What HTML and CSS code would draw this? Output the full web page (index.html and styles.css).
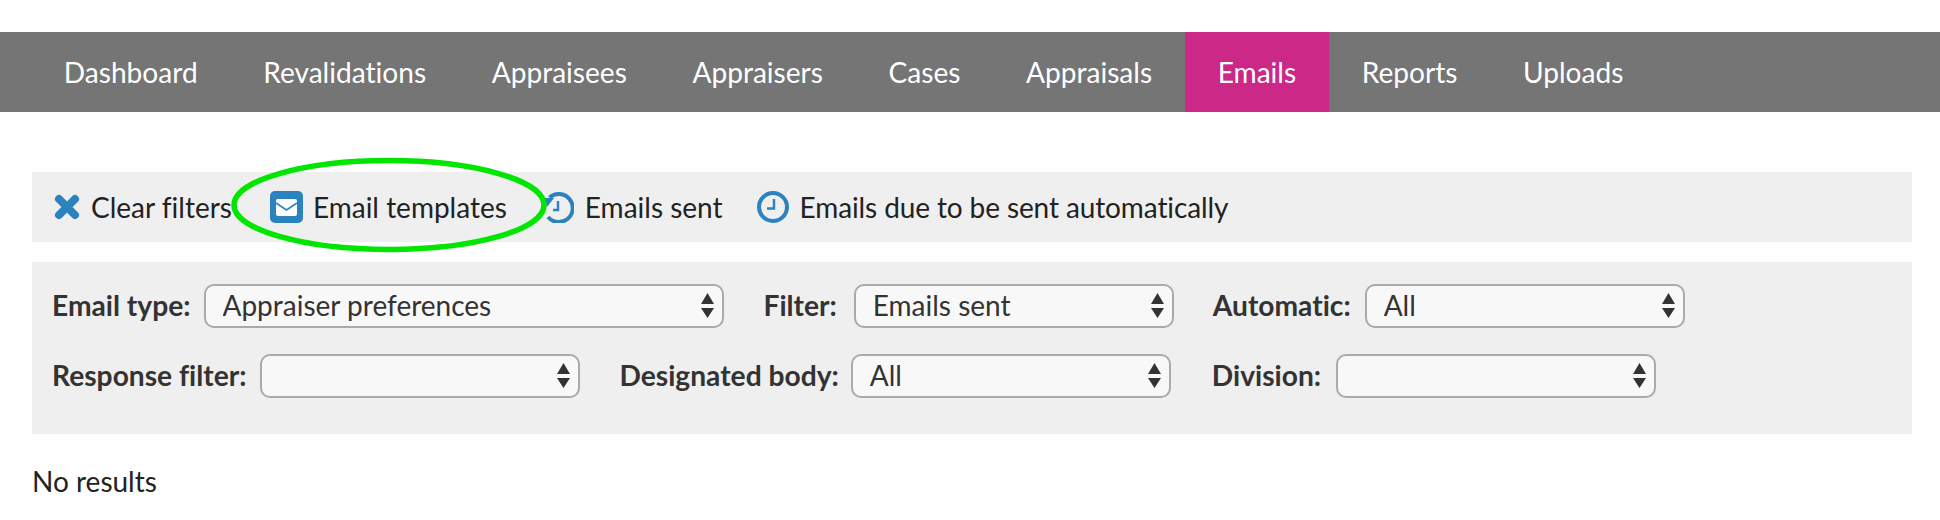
FILE: index.html
```html
<!DOCTYPE html>
<html lang="en">
<head>
<meta charset="utf-8">
<title>Emails</title>
<link rel="stylesheet" href="styles.css">
</head>
<body>
<nav class="nav">
  <a class="tab">Dashboard</a>
  <a class="tab">Revalidations</a>
  <a class="tab">Appraisees</a>
  <a class="tab">Appraisers</a>
  <a class="tab">Cases</a>
  <a class="tab">Appraisals</a>
  <a class="tab active">Emails</a>
  <a class="tab">Reports</a>
  <a class="tab">Uploads</a>
</nav>
<main class="content">
  <div class="toolbar">
    <a class="tool t-clear">
      <svg class="ico-x" viewBox="0 0 26 26"><path d="M5 5 L21 21 M21 5 L5 21" fill="none" stroke="#2a83bf" stroke-width="8" stroke-linecap="round"/></svg>
      Clear filters
    </a>
    <a class="tool t-templates">
      <svg class="ico-mail" viewBox="0 0 33 32"><rect width="33" height="32" rx="5" fill="#2a83bf"/><rect x="6" y="8" width="21" height="17" rx="2" fill="#fff"/><path d="M6 12 L16.500 19 L27 12" fill="none" stroke="#2a83bf" stroke-width="1.600"/></svg>
      Email templates
    </a>
    <a class="tool t-sent">
      <svg class="ico-clock" viewBox="0 0 32 32"><path d="M7.500 6.500 A14 14 0 1 1 6 26" fill="none" stroke="#2a83bf" stroke-width="4"/><path d="M2 7 L12 7 L5 16 Z" fill="#2a83bf"/><path d="M16 10 V19 H11" fill="none" stroke="#2a83bf" stroke-width="2.400"/></svg>
      Emails sent
    </a>
    <a class="tool t-due">
      <svg class="ico-clock" viewBox="0 0 32 32"><circle cx="16" cy="16" r="14" fill="none" stroke="#2a83bf" stroke-width="4"/><path d="M17 8 V17.500 H10" fill="none" stroke="#2a83bf" stroke-width="2.400"/></svg>
      Emails due to be sent automatically
    </a>
  </div>
  <form class="filters">
    <div class="row">
      <label class="field f-type"><span class="lbl">Email type:</span>
        <span class="sel sel-wide"><select><option>Appraiser preferences</option></select><svg class="arrows" viewBox="0 0 13 25"><path d="M6.500 0 L13 11 H0 Z M6.500 25 L0 15 H13 Z" fill="#333"/></svg></span>
      </label>
      <label class="field f-filter"><span class="lbl">Filter:</span>
        <span class="sel"><select><option>Emails sent</option></select><svg class="arrows" viewBox="0 0 13 25"><path d="M6.500 0 L13 11 H0 Z M6.500 25 L0 15 H13 Z" fill="#333"/></svg></span>
      </label>
      <label class="field"><span class="lbl">Automatic:</span>
        <span class="sel"><select><option>All</option></select><svg class="arrows" viewBox="0 0 13 25"><path d="M6.500 0 L13 11 H0 Z M6.500 25 L0 15 H13 Z" fill="#333"/></svg></span>
      </label>
    </div>
    <div class="row row-b">
      <label class="field"><span class="lbl">Response filter:</span>
        <span class="sel"><select><option></option></select><svg class="arrows" viewBox="0 0 13 25"><path d="M6.500 0 L13 11 H0 Z M6.500 25 L0 15 H13 Z" fill="#333"/></svg></span>
      </label>
      <label class="field f-body"><span class="lbl">Designated body:</span>
        <span class="sel"><select><option>All</option></select><svg class="arrows" viewBox="0 0 13 25"><path d="M6.500 0 L13 11 H0 Z M6.500 25 L0 15 H13 Z" fill="#333"/></svg></span>
      </label>
      <label class="field f-division"><span class="lbl">Division:</span>
        <span class="sel"><select><option></option></select><svg class="arrows" viewBox="0 0 13 25"><path d="M6.500 0 L13 11 H0 Z M6.500 25 L0 15 H13 Z" fill="#333"/></svg></span>
      </label>
    </div>
  </form>
  <p class="empty">No results</p>
</main>
<svg class="circle" viewBox="0 0 320 96"><ellipse cx="160" cy="48" rx="155" ry="44.500" fill="none" stroke="#00e600" stroke-width="5.500"/></svg>
</body>
</html>
```
FILE: styles.css
```css
* { box-sizing: border-box; }
html, body { margin: 0; background: #fff; }
body {
  font-family: Lato, "Liberation Sans", sans-serif;
  font-size: 28px;
  font-variant-ligatures: none;
  color: #222;
  padding-top: 32px;
  position: relative;
  height: 520px;
  overflow: hidden;
}
.nav {
  display: flex;
  height: 80px;
  padding-left: 31px;
  background: #757575;
}
.tab {
  display: flex;
  align-items: center;
  padding: 0 32.800px;
  color: #fff;
  font-size: 28.1px;
}
.tab.active { background: #cb2888; }
.content { padding: 60px 28px 0 32px; }
.toolbar {
  display: flex;
  align-items: center;
  height: 70px;
  padding-left: 22px;
  background: #efefef;
}
.tool { display: flex; align-items: center; gap: 11px; }
.t-clear { margin-right: 38px; }
.t-templates { margin-right: 35px; gap: 10px; }
.t-sent { margin-right: 34px; gap: 11px; }
.t-due { letter-spacing: -0.11px; }
.ico-x { width: 26px; height: 26px; }
.ico-mail { width: 33px; height: 32px; }
.ico-clock { width: 32px; height: 32px; }
.filters {
  margin-top: 20px;
  height: 172px;
  padding: 22px 20px 0;
  background: #efefef;
  display: flex;
  flex-direction: column;
  gap: 26px;
}
.row { display: flex; gap: 40px; }
.row-b { gap: 39px; }
.field {
  display: flex;
  align-items: center;
  gap: 14px;
  font-weight: 700;
  font-size: 28.2px;
  color: #333;
}
.f-type { gap: 13px; }
.f-filter { gap: 17px; margin-right: -1px; }
.f-body { gap: 12px; margin-right: 2px; }
.f-division { gap: 15px; }
.lbl { margin-bottom: 2px; }
.sel { position: relative; display: block; width: 320px; height: 44px; }
.sel-wide { width: 520px; }
select {
  appearance: none;
  display: block;
  width: 100%;
  height: 100%;
  padding: 0 40px 2px 17px;
  border: 2px solid #aaa;
  border-radius: 10px;
  background: #f8f8f8;
  color: #333;
  font: 400 28px Lato, "Liberation Sans", sans-serif;
  font-variant-ligatures: none;
}
.arrows {
  position: absolute;
  right: 10px;
  top: 9px;
  width: 13px;
  height: 25px;
}
.empty { margin: 30px 0 0; color: #222; }
.circle {
  position: absolute;
  left: 229px;
  top: 157px;
  width: 320px;
  height: 96px;
}
```
